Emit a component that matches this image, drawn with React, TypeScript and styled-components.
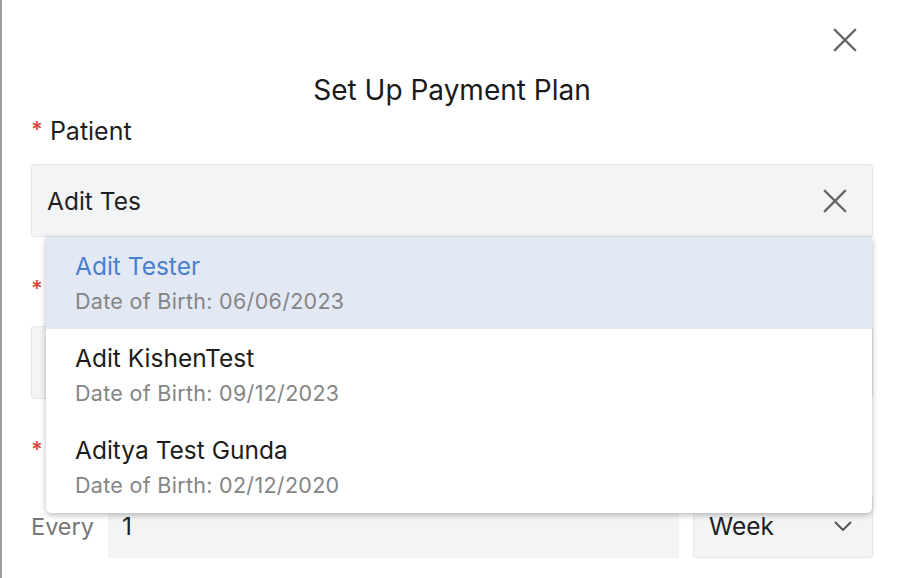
import styled, { createGlobalStyle } from 'styled-components';

const Global = createGlobalStyle`
  html, body { margin:0; padding:0; background:#fff; }
  body { font-family: Inter, "Noto Sans", sans-serif; color:#1c1c1c; }
  * { box-sizing:border-box; }
`;

const Panel = styled.div`
  width:900px;
  height:578px;
  overflow:hidden;
  background:#fff;
  border-left:2px solid #9c9c9c;
  padding:28px 27px 0 29px;
  display:flex;
  flex-direction:column;
`;

const Header = styled.div`
  display:flex;
  justify-content:flex-end;
  padding-right:16px;
  height:24px;
`;

const IconBtn = styled.button`
  border:none;
  background:none;
  padding:0;
  width:24px;
  height:24px;
  display:flex;
  color:#666;
  cursor:pointer;
`;

const Title = styled.h2`
  margin:21px 0 0;
  text-align:center;
  font-size:28px;
  line-height:34px;
  font-weight:400;
  color:#1a1a1a;
`;

const Label = styled.label<{ $top: number }>`
  display:flex;
  align-items:flex-start;
  gap:7px;
  height:30px;
  margin-top:${p => p.$top}px;
  font-size:25px;
  line-height:30px;
  color:#1f1f1f;
`;

const Star = styled.span`
  color:#e0453a;
  font-size:22px;
  font-weight:600;
  line-height:26px;
`;

const Field = styled.div<{ $top: number }>`
  position:relative;
  margin-top:${p => p.$top}px;
`;

const InputBox = styled.div`
  height:73px;
  display:flex;
  align-items:center;
  justify-content:space-between;
  padding:0 25px 0 15px;
  background:#f3f4f6;
  border:1px solid #e5e7eb;
  border-radius:3px;
  font-size:24.5px;
  color:#1f1f1f;
`;

const Menu = styled.ul`
  position:absolute;
  top:100%;
  left:15px;
  right:1px;
  margin:0;
  padding:0;
  list-style:none;
  background:#fff;
  border-radius:0 0 6px 6px;
  box-shadow:0 2px 6px rgba(0,0,0,0.28);
  overflow:hidden;
  z-index:10;
`;

const Option = styled.li<{ $active?: boolean }>`
  padding:14px 29px 15px;
  background:${p => (p.$active ? '#e3e9f4' : '#fff')};
`;

const Name = styled.div<{ $active?: boolean }>`
  font-size:24.5px;
  line-height:30px;
  color:${p => (p.$active ? '#4a7fd0' : '#1c1c1c')};
`;

const Dob = styled.div`
  margin-top:7px;
  font-size:21.5px;
  line-height:26px;
  color:#858585;
  letter-spacing:0.3px;
`;

const Row = styled.div`
  display:flex;
  align-items:center;
  gap:14px;
  margin-top:28px;
`;

const Muted = styled.span`
  font-size:23.5px;
  color:#777;
`;

const NumberBox = styled.div`
  flex:1;
  height:63px;
  display:flex;
  align-items:center;
  padding:0 14px;
  background:#f3f4f6;
  font-size:24.5px;
  color:#1f1f1f;
`;

const Select = styled.div`
  width:180px;
  height:64px;
  display:flex;
  align-items:center;
  justify-content:space-between;
  padding:0 20px 0 15px;
  background:#f3f4f6;
  border:1px solid #e5e7eb;
  border-radius:3px;
  font-size:24.5px;
  color:#1f1f1f;
`;

const X = ({ size = 24 }: { size?: number }) => (
  <svg width={size} height={size} viewBox="0 0 24 24" fill="none" stroke="#666" strokeWidth="2.4" strokeLinecap="square">
    <path d="M2 2L22 22M22 2L2 22" />
  </svg>
);

const patients = [
  { name: 'Adit Tester', dob: '06/06/2023' },
  { name: 'Adit KishenTest', dob: '09/12/2023' },
  { name: 'Aditya Test Gunda', dob: '02/12/2020' },
];

export default function App() {
  return (
    <>
      <Global />
      <Panel>
        <Header>
          <IconBtn aria-label="Close"><X /></IconBtn>
        </Header>
        <Title>Set Up Payment Plan</Title>
        <Label $top={9}><Star>*</Star>Patient</Label>
        <Field $top={18}>
          <InputBox>
            <span>Adit Tes</span>
            <X />
          </InputBox>
          <Menu>
            {patients.map((p, i) => (
              <Option key={p.name} $active={i === 0}>
                <Name $active={i === 0}>{p.name}</Name>
                <Dob>Date of Birth: {p.dob}</Dob>
              </Option>
            ))}
          </Menu>
        </Field>
        {/* labels of the next fields sit under the open menu, only their marks show */}
        <Label $top={38}><Star>*</Star></Label>
        <Field $top={21}>
          <InputBox />
        </Field>
        <Label $top={37}><Star>*</Star></Label>
        <Row>
          <Muted>Every</Muted>
          <NumberBox>1</NumberBox>
          <Select>
            <span>Week</span>
            <svg width="18" height="10" viewBox="0 0 18 10" fill="none" stroke="#555" strokeWidth="2">
              <path d="M1 1l8 8 8-8" />
            </svg>
          </Select>
        </Row>
      </Panel>
    </>
  );
}
